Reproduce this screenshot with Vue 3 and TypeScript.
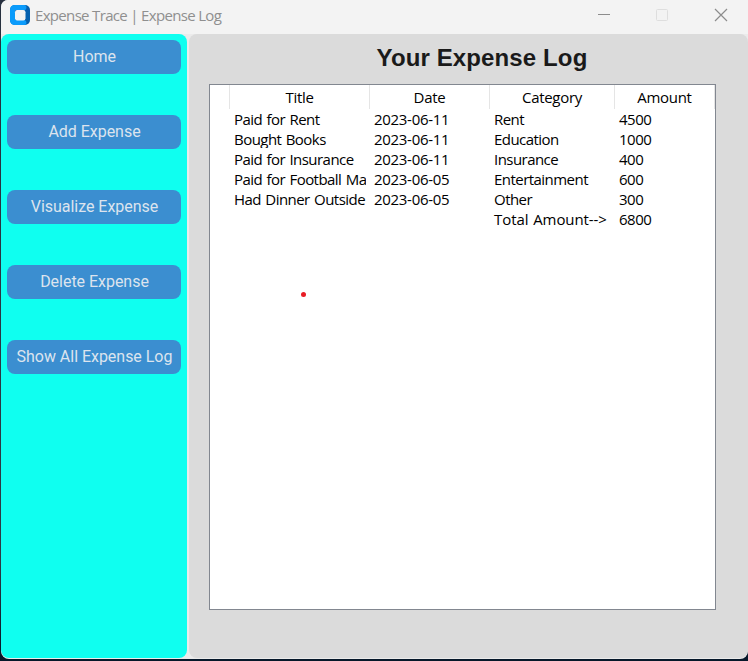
<script setup lang="ts">
interface Entry {
  title: string
  date: string
  category: string
  amount: string
  total?: boolean
}

const menu: string[] = ['Home', 'Add Expense', 'Visualize Expense', 'Delete Expense', 'Show All Expense Log']
const columns: string[] = ['Title', 'Date', 'Category', 'Amount']
const entries: Entry[] = [
  { title: 'Paid for Rent', date: '2023-06-11', category: 'Rent', amount: '4500' },
  { title: 'Bought Books', date: '2023-06-11', category: 'Education', amount: '1000' },
  { title: 'Paid for Insurance', date: '2023-06-11', category: 'Insurance', amount: '400' },
  { title: 'Paid for Football Ma', date: '2023-06-05', category: 'Entertainment', amount: '600' },
  { title: 'Had Dinner Outside', date: '2023-06-05', category: 'Other', amount: '300' },
  { title: '', date: '', category: 'Total Amount-->', amount: '6800', total: true },
]
</script>

<template>
  <div class="desktop">
    <div class="window">
      <header class="titlebar">
        <svg class="logo" width="20" height="20" viewBox="0 0 20 20">
          <rect width="20" height="20" rx="5" fill="#0560ae" />
          <path d="M5 0H14.5Q16.5 0 16.5 2.5Q16.5 5 14.5 5H5V15H14.5Q16.5 15.5 16.5 17.5Q16.5 20 14.5 20H5Q0 20 0 15V5Q0 0 5 0Z" fill="#0a9bfb" />
          <rect x="5" y="5" width="10.5" height="10.5" rx="2.2" fill="#f3f3f3" />
        </svg>
        <span class="caption">Expense Trace | Expense Log</span>
        <svg class="controls" width="132" height="16" viewBox="0 0 132 16" fill="none">
          <path d="M0 7.5H12" stroke="#8c8c8c" />
          <rect x="58.5" y="2.5" width="11" height="11" rx="1" stroke="#dedede" />
          <path d="M117 2L129 14M129 2L117 14" stroke="#8c8c8c" stroke-width="1.2" />
        </svg>
      </header>
      <div class="content">
        <nav class="sidebar">
          <button v-for="item in menu" :key="item" class="menu-button">{{ item }}</button>
        </nav>
        <main class="panel">
          <h1 class="heading">Your Expense Log</h1>
          <div class="log">
            <div class="row head">
              <span class="gutter"></span>
              <span v-for="c in columns" :key="c" class="head-cell">{{ c }}</span>
            </div>
            <div v-for="(e, i) in entries" :key="i" class="row" :class="{ total: e.total }">
              <span></span>
              <span class="cell text"><span class="clip">{{ e.title }}</span></span>
              <span class="cell">{{ e.date }}</span>
              <span class="cell text">{{ e.category }}</span>
              <span class="cell amount">{{ e.amount }}</span>
            </div>
            <i class="marker"></i>
          </div>
        </main>
      </div>
    </div>
  </div>
</template>

<style>
body {
  margin: 0;
  overflow: hidden;
}
</style>

<style scoped>
.desktop {
  box-sizing: border-box;
  width: 748px;
  height: 661px;
  padding: 0 0 2px 1px;
  background: linear-gradient(#27303f, #2f3a46 85%, #06182a 99%);
}
.window {
  height: 659px;
  background: #ebebeb;
  border-radius: 7px 0 8px 8px;
  overflow: hidden;
}
.titlebar {
  box-sizing: border-box;
  height: 34px;
  padding: 0 18px 4px 9px;
  display: flex;
  align-items: center;
  background: #f3f3f3;
}
.caption {
  margin: 0 0 0 5px;
  font: 15px/20px "Open Sans", "Noto Sans", sans-serif;
  letter-spacing: -0.67px;
  color: #8f8f8f;
  white-space: nowrap;
}
.controls {
  margin-left: auto;
}
.content {
  display: flex;
  gap: 2px;
  height: 624px;
}
.sidebar {
  box-sizing: border-box;
  width: 186px;
  padding: 6px;
  display: flex;
  flex-direction: column;
  gap: 41px;
  background: #0ffff0;
  border-radius: 8px;
}
.menu-button {
  height: 34px;
  padding: 0 0 1px 1px;
  border: 0;
  border-radius: 8px;
  background: #3b8ed0;
  color: #dce4ee;
  font: 16px/32px Roboto, sans-serif;
  letter-spacing: -0.03px;
  white-space: nowrap;
}
.panel {
  box-sizing: border-box;
  flex: 1;
  padding: 8px 32px 0 20px;
  background: #dbdbdb;
  border-radius: 8px;
}
.heading {
  margin: 0 0 10px;
  padding-left: 39px;
  height: 32px;
  font: bold 24px/32px "Liberation Sans", Arial, sans-serif;
  letter-spacing: 0.12px;
  color: #1a1a1a;
  text-align: center;
}
.log {
  position: relative;
  box-sizing: border-box;
  width: 507px;
  height: 526px;
  border: 1px solid #828790;
  background: #fff;
  font: 15px/18px "Open Sans", "Noto Sans", sans-serif;
  letter-spacing: -0.3px;
  color: #000;
}
.row {
  display: grid;
  grid-template-columns: 20px 140px 120px 125px 100px;
  height: 20px;
  white-space: nowrap;
}
.head {
  height: 25px;
}
.gutter,
.head-cell {
  box-sizing: border-box;
  height: 24px;
  border-right: 1px solid #e5e5e5;
  text-align: center;
  line-height: 24px;
}
.cell {
  padding-left: 4px;
}
.text {
  letter-spacing: -0.54px;
  word-spacing: 1px;
}
.amount {
  letter-spacing: -0.5px;
}
.total .text {
  letter-spacing: -0.08px;
}
.clip {
  display: block;
  width: 132px;
  overflow: hidden;
}
.marker {
  position: absolute;
  left: 90.5px;
  top: 206.5px;
  width: 5px;
  height: 5px;
  border-radius: 50%;
  background: #e81c24;
}
</style>
